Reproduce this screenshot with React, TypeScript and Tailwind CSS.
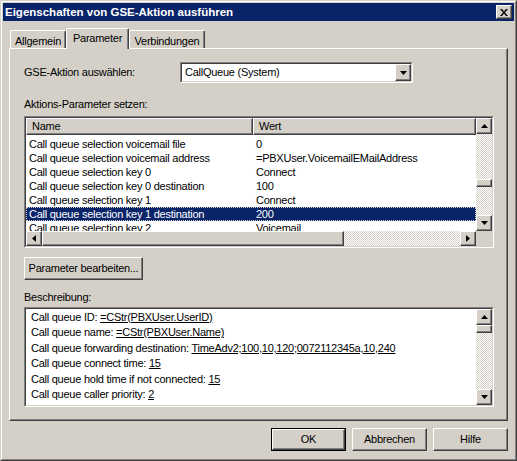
import React from 'react';

const RAISED =
  'border border-t-white border-l-white border-r-[#404040] border-b-[#404040] shadow-[inset_-1px_-1px_0_#808080] bg-[#d4d0c8]';
const TRACK =
  'bg-[image:repeating-conic-gradient(#d4d0c8_0_25%,#ffffff_0_50%)] bg-[length:2px_2px]';

function Arrow({ dir }: { dir: 'up' | 'down' | 'left' | 'right' }) {
  const d = {
    up: 'M3.5 0L7 4H0z',
    down: 'M0 0h7L3.5 4z',
    left: 'M4 0v7L0 3.5z',
    right: 'M0 0l4 3.5L0 7z',
  }[dir];
  const vertical = dir === 'up' || dir === 'down';
  return (
    <svg width={vertical ? 7 : 4} height={vertical ? 4 : 7} viewBox={vertical ? '0 0 7 4' : '0 0 4 7'}>
      <path d={d} fill="#000" />
    </svg>
  );
}

function ScrollBtn({ dir, className = '' }: { dir: 'up' | 'down' | 'left' | 'right'; className?: string }) {
  return (
    <div className={`${RAISED} flex items-center justify-center shrink-0 ${className}`}>
      <Arrow dir={dir} />
    </div>
  );
}

function Sunken({ className = '', children }: { className?: string; children: React.ReactNode }) {
  return (
    <div className={`border border-t-[#808080] border-l-[#808080] border-r-white border-b-white ${className}`}>
      <div className="h-full w-full border border-t-[#404040] border-l-[#404040] border-r-[#d4d0c8] border-b-[#d4d0c8] bg-white overflow-hidden">
        {children}
      </div>
    </div>
  );
}

const rows = [
  ['Call queue selection voicemail file', '0'],
  ['Call queue selection voicemail address', '=PBXUser.VoicemailEMailAddress'],
  ['Call queue selection key 0', 'Connect'],
  ['Call queue selection key 0 destination', '100'],
  ['Call queue selection key 1', 'Connect'],
  ['Call queue selection key 1 destination', '200'],
  ['Call queue selection key 2', 'Voicemail'],
];

const description = [
  ['Call queue ID: ', '=CStr(PBXUser.UserID)'],
  ['Call queue name: ', '=CStr(PBXUser.Name)'],
  ['Call queue forwarding destination: ', 'TimeAdv2;100,10,120;0072112345a,10,240'],
  ['Call queue connect time: ', '15'],
  ['Call queue hold time if not connected: ', '15'],
  ['Call queue caller priority: ', '2'],
];

export default function App() {
  return (
    <div className="w-[517px] h-[461px] border border-t-[#d4d0c8] border-l-[#d4d0c8] border-r-[#404040] border-b-[#404040] bg-[#d4d0c8] font-['Liberation_Sans',Arial,sans-serif] text-[11px] tracking-[-0.25px] text-black select-none">
      <div className="h-full w-full border border-t-white border-l-white border-r-[#808080] border-b-[#808080] p-px flex flex-col">
        {/* title bar */}
        <div className="h-[18px] shrink-0 bg-[#0a246a] flex items-center justify-between pl-[2px] pr-[2px]">
          <span className="text-white font-bold text-[11.5px] tracking-normal leading-[18px]">
            Eigenschaften von GSE-Aktion ausführen
          </span>
          <div className={`${RAISED} w-[16px] h-[14px] flex items-center justify-center`}>
            <svg width="8" height="7" viewBox="0 0 8 7">
              <path d="M0 0h2l2 2.5L6 0h2L5 3.5 8 7H6L4 4.5 2 7H0l3-3.5z" fill="#000" />
            </svg>
          </div>
        </div>

        <div className="pl-[6px] pr-[6px] flex flex-col">
          {/* tabs */}
          <div className="mt-[7px] h-[20px] flex items-end pl-px">
            <div className="w-[56px] h-[18px] border-t border-l border-white border-r border-r-[#404040] shadow-[inset_-1px_0_0_#808080] rounded-t-[2px] text-center pt-[4px] leading-[13px]">
              Allgemein
            </div>
            <div className="relative z-10 -mb-px w-[63px] h-[21px] bg-[#d4d0c8] border-t border-l border-white border-r border-r-[#404040] shadow-[inset_-1px_0_0_#808080] rounded-t-[2px] text-center pt-[3px] leading-[13px]">
              Parameter
            </div>
            <div className="w-[76px] h-[18px] border-t border-l border-white border-r border-r-[#404040] shadow-[inset_-1px_0_0_#808080] rounded-t-[2px] text-center pt-[4px] leading-[13px]">
              Verbindungen
            </div>
          </div>

          {/* panel */}
          <div className="w-[499px] h-[373px] border border-t-white border-l-white border-r-[#404040] border-b-[#404040] shadow-[inset_-1px_-1px_0_#808080] pl-[14px] pt-[13px] flex flex-col">
            <div className="h-[21px] flex items-center">
              <div className="w-[156px]">GSE-Aktion auswählen:</div>
              <Sunken className="w-[233px] h-[21px]">
                <div className="h-full flex items-center">
                  <div className="flex-1 pl-[3px] leading-[17px]">CallQueue (System)</div>
                  <ScrollBtn dir="down" className="w-[16px] h-[17px]" />
                </div>
              </Sunken>
            </div>

            <div className="mt-[14px] h-[14px] leading-[14px]">Aktions-Parameter setzen:</div>

            <Sunken className="mt-[5px] w-[470px] h-[132px]">
              <div className="flex flex-col h-full">
                <div className="h-[113px] flex">
                  <div className="w-[450px] flex flex-col">
                    <div className="h-[17px] flex shrink-0">
                      <div className={`${RAISED} w-[227px] pl-[5px] leading-[14px]`}>Name</div>
                      <div className={`${RAISED} w-[223px] pl-[5px] leading-[14px]`}>Wert</div>
                    </div>
                    <div className="pt-[2px] flex-1 overflow-hidden">
                      {rows.map(([name, value], i) => (
                        <div
                          key={name}
                          className={`h-[14px] leading-[14px] flex ${
                            i === 5
                              ? 'bg-[#0a246a] text-white outline-1 outline-dotted outline-[#d4d0c8] -outline-offset-1'
                              : ''
                          }`}
                        >
                          <div className="w-[227px] pl-[3px] whitespace-nowrap overflow-hidden">{name}</div>
                          <div className="flex-1 pl-[3px] whitespace-nowrap overflow-hidden">{value}</div>
                        </div>
                      ))}
                    </div>
                  </div>
                  <div className="w-[16px] flex flex-col">
                    <ScrollBtn dir="up" className="h-[16px]" />
                    <div className={`h-[45px] ${TRACK}`} />
                    <div className={`${RAISED} h-[8px]`} />
                    <div className={`flex-1 ${TRACK}`} />
                    <ScrollBtn dir="down" className="h-[16px]" />
                  </div>
                </div>
                <div className="h-[15px] flex">
                  <ScrollBtn dir="left" className="w-[16px]" />
                  <div className={`${RAISED} w-[302px]`} />
                  <div className={`flex-1 ${TRACK}`} />
                  <ScrollBtn dir="right" className="w-[16px]" />
                  <div className="w-[16px] bg-[#d4d0c8]" />
                </div>
              </div>
            </Sunken>

            <div className={`${RAISED} mt-[9px] w-[119px] h-[23px] flex items-center justify-center`}>
              Parameter bearbeiten...
            </div>

            <div className="mt-[10px] h-[14px] leading-[14px]">Beschreibung:</div>

            <Sunken className="mt-[3px] w-[470px] h-[100px]">
              <div className="flex h-full">
                <div className="flex-1 pl-[5px] pt-[1px] leading-[15.4px] whitespace-nowrap">
                  {description.map(([label, value]) => (
                    <div key={label}>
                      {label}
                      <span className="underline underline-offset-[1px]">{value}</span>
                    </div>
                  ))}
                </div>
                <div className="w-[16px] flex flex-col">
                  <ScrollBtn dir="up" className="h-[16px]" />
                  <div className={`${RAISED} h-[8px]`} />
                  <div className={`flex-1 ${TRACK}`} />
                  <ScrollBtn dir="down" className="h-[16px]" />
                </div>
              </div>
            </Sunken>
          </div>

          {/* dialog buttons */}
          <div className="mt-[7px] flex justify-end gap-[6px]">
            <div className="w-[75px] h-[23px] border border-black">
              <div className={`${RAISED} h-full flex items-center justify-center`}>OK</div>
            </div>
            <div className={`${RAISED} w-[75px] h-[23px] flex items-center justify-center`}>Abbrechen</div>
            <div className={`${RAISED} w-[75px] h-[23px] flex items-center justify-center`}>Hilfe</div>
          </div>
        </div>
      </div>
    </div>
  );
}
